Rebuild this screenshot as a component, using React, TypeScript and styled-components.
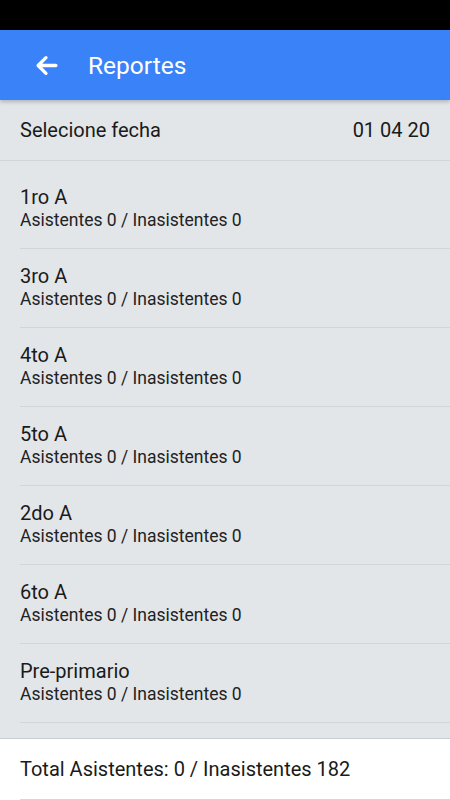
import styled, { createGlobalStyle } from "styled-components";

const GlobalStyle = createGlobalStyle`
  html, body {
    margin: 0;
    padding: 0;
    background: #ffffff;
    font-family: Roboto, "Noto Sans", "Liberation Sans", sans-serif;
  }
  * {
    box-sizing: border-box;
  }
`;

interface Course {
  name: string;
  present: number;
  absent: number;
}

const courses: Course[] = [
  { name: "1ro A", present: 0, absent: 0 },
  { name: "3ro A", present: 0, absent: 0 },
  { name: "4to A", present: 0, absent: 0 },
  { name: "5to A", present: 0, absent: 0 },
  { name: "2do A", present: 0, absent: 0 },
  { name: "6to A", present: 0, absent: 0 },
  { name: "Pre-primario", present: 0, absent: 0 },
];

const StyledPage = styled.div`
  width: 450px;
  height: 800px;
  display: flex;
  flex-direction: column;
  overflow: hidden;
  background: #e2e6e9;
  color: #1a1a1a;
`;

const StatusBar = styled.div`
  height: 30px;
  flex: none;
  background: #000000;
`;

const Toolbar = styled.header`
  height: 70px;
  flex: none;
  display: flex;
  align-items: center;
  gap: 30px;
  padding-left: 35px;
  background: #3a82f7;
  color: #ffffff;
  box-shadow: 0 2px 4px rgba(0, 0, 0, 0.22);
  position: relative;
  z-index: 1;

  h1 {
    margin: 0;
    font-size: 24.5px;
    font-weight: 400;
  }
`;

const BackButton = styled.button`
  border: 0;
  padding: 0;
  background: none;
  display: flex;
  color: inherit;
`;

const DateRow = styled.div`
  height: 61px;
  flex: none;
  display: flex;
  align-items: center;
  justify-content: space-between;
  padding: 0 20px;
  font-size: 20px;
  border-bottom: 1px solid #d2d6da;
`;

const List = styled.div`
  flex: 1;
  padding-top: 9px;
`;

const Item = styled.div`
  padding-left: 20px;
`;

const ItemInner = styled.div`
  height: 79px;
  padding-top: 16px;
  border-bottom: 1px solid #d2d6da;

  .title {
    font-size: 20px;
    line-height: 23px;
  }

  .subtitle {
    font-size: 17.5px;
    line-height: 22px;
    color: #222222;
  }
`;

const Footer = styled.footer`
  height: 62px;
  flex: none;
  background: #ffffff;
  border-top: 1px solid #c9cdd1;
  padding-left: 20px;
`;

const FooterInner = styled.div`
  height: 100%;
  display: flex;
  align-items: center;
  font-size: 20px;
  border-bottom: 1px solid #d6d6d6;
`;

const ArrowBack = () => (
  <svg width="23" height="23" viewBox="0 0 22 22" fill="none">
    <path
      d="M20 11H3M10.5 3.5L3 11l7.5 7.5"
      stroke="currentColor"
      strokeWidth="3.2"
      strokeLinecap="round"
      strokeLinejoin="round"
    />
  </svg>
);

const App = () => {
  const totalPresent = courses.reduce((s, c) => s + c.present, 0);

  return (
    <>
      <GlobalStyle />
      <StyledPage>
        <StatusBar />
        <Toolbar>
          <BackButton aria-label="Volver">
            <ArrowBack />
          </BackButton>
          <h1>Reportes</h1>
        </Toolbar>
        <DateRow>
          <span>Selecione fecha</span>
          <span>01 04 20</span>
        </DateRow>
        <List>
          {courses.map((c) => (
            <Item key={c.name}>
              <ItemInner>
                <div className="title">{c.name}</div>
                <div className="subtitle">
                  Asistentes {c.present} / Inasistentes {c.absent}
                </div>
              </ItemInner>
            </Item>
          ))}
        </List>
        <Footer>
          <FooterInner>
            Total Asistentes: {totalPresent} / Inasistentes 182
          </FooterInner>
        </Footer>
      </StyledPage>
    </>
  );
};

export default App;
